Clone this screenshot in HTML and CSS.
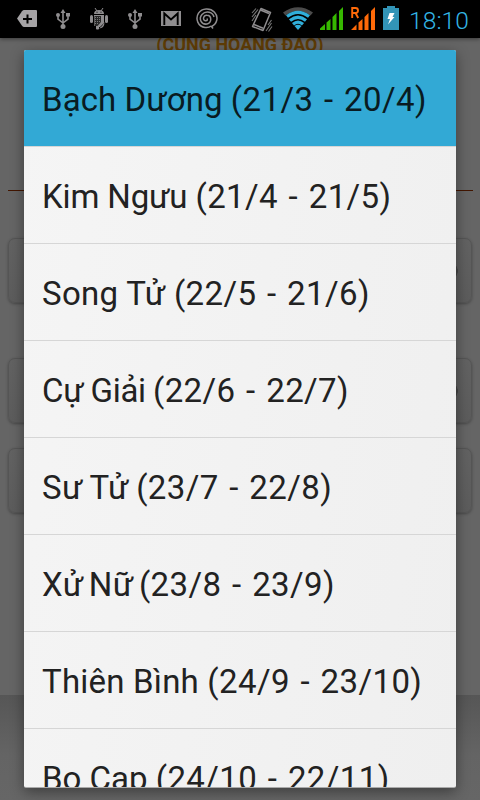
FILE: index.html
```html
<!DOCTYPE html>
<html lang="vi">
<head>
	<meta charset="UTF-8">
	<title>Cung Hoàng Đạo</title>
	<link rel="stylesheet" href="styles.css">
</head>
<body>
	<div id="status">
		<svg class="ic tag" width="20" height="17" viewBox="0 0 20 17">
			<path d="M0 8.5L5 1.2Q6 0 7 0H19Q20 0 20 1V16Q20 17 19 17H7Q6 17 5 15.8Z" fill="#a5a3a5"/>
			<path d="M10.5 4.5V13.5M6 9H15" stroke="#000" stroke-width="2"/>
		</svg>
		<svg class="ic usb" width="14" height="20" viewBox="0 0 14 20">
			<path d="M7 3V17M7 14L2 10V6M7 14L12 10V5" fill="none" stroke="#8f8d8f" stroke-width="1.6"/>
			<path d="M7 0L9.500 4H4.500Z" fill="#8f8d8f"/>
			<circle cx="7" cy="17.5" r="2.5" fill="#8f8d8f"/>
			<circle cx="2" cy="6" r="2" fill="#8f8d8f"/>
			<path d="M10 4H14V7.500H10Z" fill="#8f8d8f"/>
		</svg>
		<svg class="ic droid" width="18" height="22" viewBox="0 0 18 22">
			<g fill="#8f8d8f">
				<path d="M4 6Q4 2 9 2T14 6Z"/>
				<path d="M4 7H14V15L10 19H9V21Q7.500 22 6 21V18H4Z"/>
				<rect x="0" y="7" width="3" height="8" rx="1.500"/>
				<rect x="15" y="7" width="3" height="8" rx="1.500"/>
				<path d="M14.500 14L12 18L9 20.500Q14.500 20.500 14.500 14Z"/>
			</g>
			<path d="M5 0L7 3M13 0L11 3" stroke="#8f8d8f"/>
			<path d="M4.500 8H11V14L7.500 18H4.500Z" fill="#282828"/>
			<path d="M5 9.500H11M5 11.500H11M5 13.500H10M5 15.500H9" stroke="#777" stroke-dasharray="1 1"/>
			<path d="M6.500 4.200H7.500M10.500 4.200H11.500" stroke="#000"/>
		</svg>
		<svg class="ic usb2" width="14" height="20" viewBox="0 0 14 20">
			<path d="M7 3V17M7 14L2 10V6M7 14L12 10V5" fill="none" stroke="#8f8d8f" stroke-width="1.6"/>
			<path d="M7 0L9.500 4H4.500Z" fill="#8f8d8f"/>
			<circle cx="7" cy="17.5" r="2.5" fill="#8f8d8f"/>
			<circle cx="2" cy="6" r="2" fill="#8f8d8f"/>
			<path d="M10 4H14V7.500H10Z" fill="#8f8d8f"/>
		</svg>
		<svg class="ic mail" width="20" height="15" viewBox="0 0 20 15">
			<rect width="20" height="15" fill="#8f8d8f"/>
			<path d="M3.300 14V2.500L10 8.500L16.700 2.500V14" fill="none" stroke="#000" stroke-width="1.900"/>
		</svg>
		<svg class="ic swirl" width="22" height="22" viewBox="0 0 22 22">
			<path d="M11 10.500Q12 13 9.500 12.800C6 12 7.500 7 11 7.300C16 7.500 16 15 11 16C5 17 2.500 10.500 6 6.500C10 2 17 4 18 9" fill="none" stroke="#8f8d8f" stroke-width="1.500"/>
			<path d="M17 20.500L15.500 18.500C21 16 23 9 18.500 4.200C14 -0.500 6 0 2.500 5.200C-1 11 2 18.500 9 19.500Q13 20 15 18" fill="none" stroke="#8f8d8f" stroke-width="1.500"/>
		</svg>
		<svg class="ic vibrate" width="22" height="26" viewBox="0 0 22 26">
			<path d="M10 1.500L19.500 5.500L12 23.500L1.500 19.500Z" fill="none" stroke="#8f8d8f" stroke-width="1.500" stroke-linejoin="round"/>
			<path d="M9.500 3L18 6.500M3 17.500L12 21.300" stroke="#8f8d8f" stroke-width="1.500"/>
			<path d="M1 6L5 1.500M1 10L7 2.500M1 14L5 8M15 24L20.500 16M17.500 24.500L21 19.500M17 18L20.500 13" stroke="#777" stroke-width="1.100"/>
		</svg>
		<svg class="ic wifi" width="30" height="23" viewBox="0 0 30 23">
			<path d="M0 5.500Q15 -5 30 5.500L27.500 8.500Q15 -0.500 2.500 8.500Z" fill="#4b4b4b"/>
			<g fill="none" stroke="#30aeda" stroke-width="3.200">
				<path d="M4 9.600Q15 1.200 26 9.600"/>
				<path d="M7 13.500Q15 7 23 13.500"/>
				<path d="M10 17.200Q15 13 20 17.200"/>
			</g>
			<path d="M11.500 19Q15 16.300 18.500 19L15 23Z" fill="#30aeda"/>
		</svg>
		<svg class="ic signal" width="23" height="23" viewBox="0 0 23 23">
			<path d="M0 23V21.500L5 17V23ZM6.500 23V15.500L10.500 12V23ZM12.500 23V10L16.500 6V23ZM19 23V4L23 0V23Z" fill="#36b800"/>
		</svg>
		<svg class="ic roaming" width="24" height="23" viewBox="0 0 24 23">
			<path d="M0 23L5.500 17.500V23ZM7.500 23V15.500L11.500 12V23ZM13.500 23V10L17.500 6V23ZM20 23V4L24 0V23Z" fill="#ff6a09"/>
			<path d="M1.200 11V1H4.500Q7 1 7 3.500T4.500 6H1.200M4.500 6L7.200 11" fill="none" stroke="#ff6a09" stroke-width="1.900"/>
		</svg>
		<svg class="ic battery" width="16" height="24" viewBox="0 0 16 24">
			<path d="M4 0H12V2H16V24H0V2H4Z" fill="#3294b7"/>
			<path d="M6.500 7H11.500L9.500 11H11.500L5 18.500L7 13H4.500Z" fill="#fff"/>
		</svg>
		<span class="clock">18:10</span>
	</div>

	<div id="page">
		<div class="title">(CUNG HOÀNG ĐẠO)</div>
		<div class="line"></div>
		<div class="field select"></div>
		<div class="field select second"></div>
		<div class="field button"></div>
	</div>
	<div id="bottom"></div>

	<!-- popup danh sách cung -->
	<div id="dialog">
		<div class="item active"><span class="name bachduong">Bạch Dương </span><span class="date">(21/3 - 20/4)</span></div>
		<div class="item"><span class="name kimnguu">Kim Ngưu </span><span class="date">(21/4 - 21/5)</span></div>
		<div class="item"><span class="name">Song Tử </span><span class="date">(22/5 - 21/6)</span></div>
		<div class="item"><span class="name cugiai">Cự Giải </span><span class="date">(22/6 - 22/7)</span></div>
		<div class="item"><span class="name sutu">Sư Tử </span><span class="date">(23/7 - 22/8)</span></div>
		<div class="item"><span class="name xunu">Xử Nữ </span><span class="date">(23/8 - 23/9)</span></div>
		<div class="item"><span class="name thienbinh">Thiên Bình </span><span class="date">(24/9 - 23/10)</span></div>
		<div class="item"><span class="name bocap">Bọ Cạp </span><span class="date">(24/10 - 22/11)</span></div>
	</div>
</body>
</html>
```
FILE: styles.css
```css
* {
	margin: 0;
	padding: 0;
	box-sizing: border-box;
}

body {
	width: 480px;
	height: 800px;
	overflow: hidden;
	position: relative;
	background: #666;
	font-family: Roboto, "Noto Sans", sans-serif;
}

/* status bar */
#status {
	height: 38px;
	background: #000;
	display: flex;
	align-items: flex-start;
	position: relative;
	z-index: 1;
	box-shadow: 0 1px 4px rgba(0,0,0,0.45);
}
.ic {
	flex: none;
	display: block;
}
.tag { margin: 10px 0 0 17px; }
.usb { margin: 9px 0 0 19px; }
.droid { margin: 8px 0 0 20px; }
.usb2 { margin: 9px 0 0 20px; }
.mail { margin: 11px 0 0 19px; }
.swirl { margin: 8px 0 0 15px; }
.vibrate { margin: 7px 0 0 33px; }
.wifi { margin: 7px 0 0 10px; }
.signal { margin: 7px 0 0 7px; }
.roaming { margin: 7px 0 0 8px; }
.battery { margin: 6px 0 0 8px; }
.clock {
	margin: 6px 0 0 10px;
	font-size: 24.5px;
	line-height: 29px;
	letter-spacing: 0.1px;
	font-weight: 300;
	color: #33b5e5;
}

/* dimmed page */
#page {
	height: 657px;
	padding: 0 8px;
	overflow: hidden;
	background: #656565;
}
.title {
	height: 152px;
	text-align: center;
	font-size: 17.9px;
	line-height: 14px;
	font-weight: bold;
	color: #5f3d06;
}
.line {
	height: 1px;
	width: 465px;
	background: #431600;
}
.field {
	width: 464px;
	height: 65px;
	border: 1px solid #555;
	border-radius: 7px;
	background: linear-gradient(#626262, #5c5c5c);
	box-shadow: 0 1px 3px rgba(0,0,0,0.3);
}
.select {
	margin-top: 47px;
	background: radial-gradient(circle 9px at 440px 32px, #464646 95%, transparent), linear-gradient(#626262, #5c5c5c);
}
.second {
	margin-top: 55px;
}
.button {
	margin-top: 25px;
}
#bottom {
	height: 105px;
	background: linear-gradient(#565656, #646464 60px, #666);
}

/* list popup */
#dialog {
	position: absolute;
	z-index: 2;
	left: 24px;
	top: 50px;
	width: 432px;
	height: 738px;
	overflow: hidden;
	border-radius: 2px;
	border-bottom: 1px solid #aaa;
	background: linear-gradient(100deg, #f5f5f5, #efefef);
	box-shadow: 0 4px 14px rgba(0,0,0,0.4);
}
.item {
	height: 97px;
	padding: 4px 0 0 18px;
	border-bottom: 1px solid #d6d6d6;
	display: flex;
	align-items: center;
	font-size: 33px;
	line-height: 40px;
	white-space: pre;
	color: #222;
}
.active {
	background: #32a9d5;
	color: #091b22;
}
.name { letter-spacing: 0.3px; }
.bachduong { letter-spacing: 0.07px; }
.kimnguu { letter-spacing: -0.14px; }
.cugiai { letter-spacing: -0.3px; word-spacing: -0.7px; }
.sutu { word-spacing: -1px; }
.xunu { word-spacing: -3px; }
.thienbinh { letter-spacing: 0.2px; }
.bocap { letter-spacing: 0; }
.date {
	letter-spacing: 0.4px;
	word-spacing: 2px;
}
```
